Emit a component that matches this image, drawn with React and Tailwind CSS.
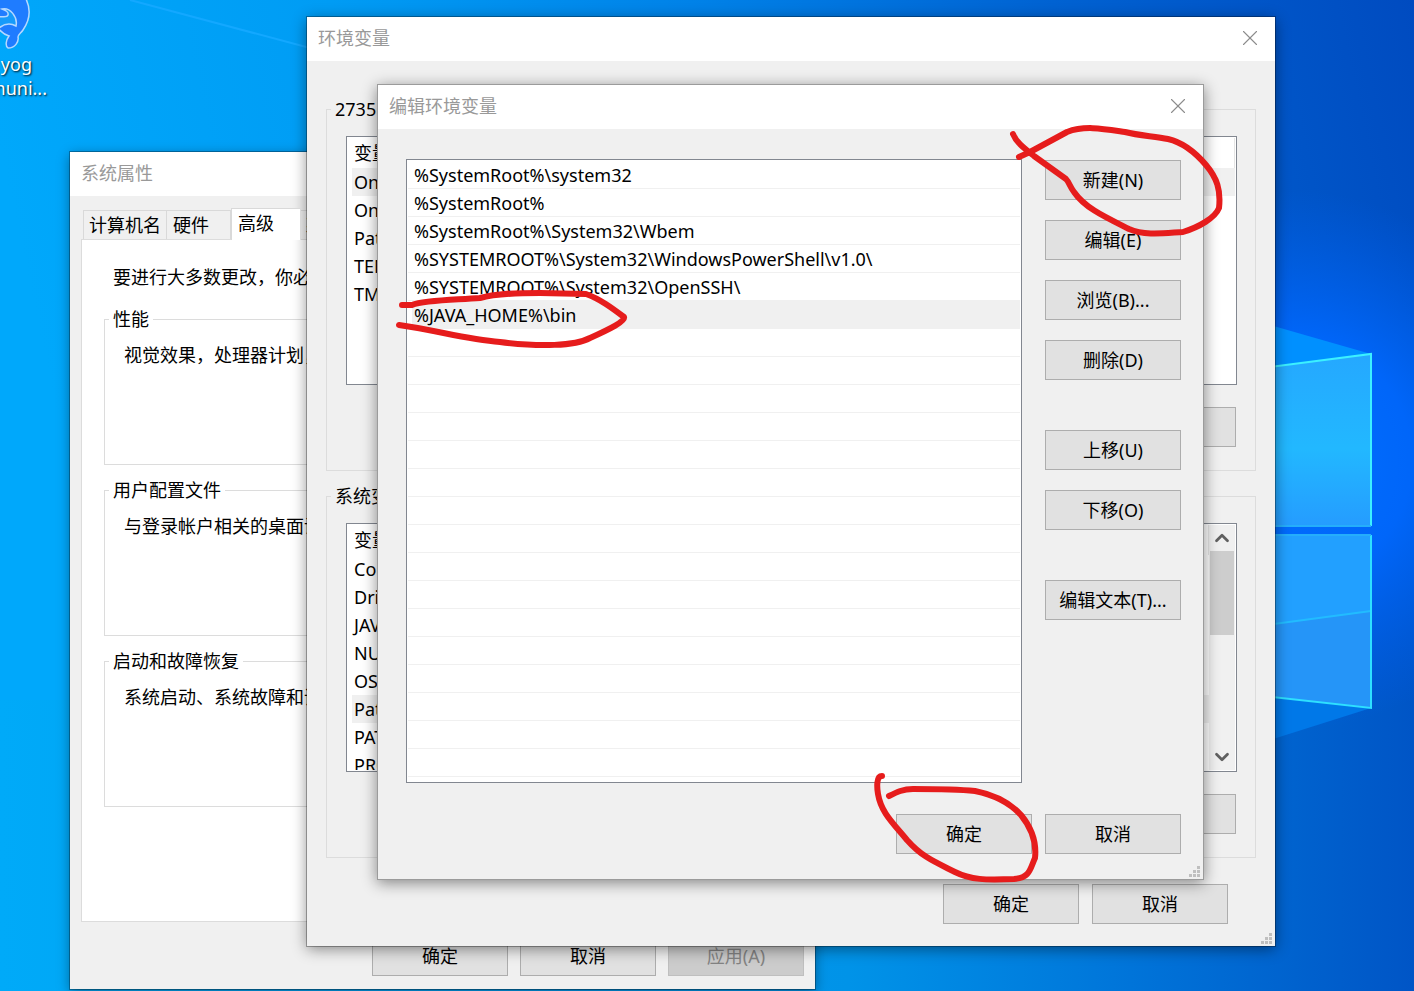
import React from 'react';
import { X, ChevronUp, ChevronDown } from 'lucide-react';

const pathEntries = [
  '%SystemRoot%\\system32',
  '%SystemRoot%',
  '%SystemRoot%\\System32\\Wbem',
  '%SYSTEMROOT%\\System32\\WindowsPowerShell\\v1.0\\',
  '%SYSTEMROOT%\\System32\\OpenSSH\\',
  '%JAVA_HOME%\\bin'
];

const userVariables = ['OneDrive', 'OneDriveConsumer', 'Path', 'TEMP', 'TMP'];

const systemVariables = [
  'ComSpec',
  'DriverData',
  'JAVA_HOME',
  'NUMBER_OF_PROCESSORS',
  'OS',
  'Path',
  'PATHEXT',
  'PROCESSOR_ARCHITECTURE'
];

const DialogButton = ({ children, disabled = false }) => (
  <button
    disabled={disabled}
    className="h-10 w-[136px] shrink-0 border border-[#adadad] bg-[#e1e1e1] text-black whitespace-nowrap disabled:border-[#bfbfbf] disabled:bg-[#cccccc] disabled:text-[#838383]"
  >
    {children}
  </button>
);

const TitleBar = ({ title, closable = true }) => (
  <header className="flex h-11 shrink-0 items-center justify-between bg-white pb-[2px] pl-[11px] pr-3 text-[#999999]">
    <h2>{title}</h2>
    {closable && (
      <button aria-label="关闭" className="text-[#8c8c8c]">
        <X size={26} strokeWidth={1} />
      </button>
    )}
  </header>
);

const ResizeGrip = () => (
  <svg className="absolute right-[2px] bottom-[1px] h-3 w-3" viewBox="0 0 12 12" fill="#bfbfbf" aria-hidden="true">
    <path d="M8 0h3v3H8zM4 4h3v3H4zM8 4h3v3H8zM0 8h3v3H0zM4 8h3v3H4zM8 8h3v3H8z" />
  </svg>
);

const Wallpaper = () => (
  <svg
    className="absolute inset-0 h-full w-full"
    viewBox="0 0 1414 991"
    preserveAspectRatio="none"
    aria-hidden="true"
  >
    <defs>
      <linearGradient id="sky" x1="0" y1="0.15" x2="1" y2="0">
        <stop offset="0" stopColor="#00a8fb" />
        <stop offset="0.25" stopColor="#009cf4" />
        <stop offset="0.5" stopColor="#0082e8" />
        <stop offset="0.75" stopColor="#0062d2" />
        <stop offset="1" stopColor="#004bc0" />
      </linearGradient>
      <linearGradient id="floor" x1="0" y1="0" x2="1" y2="0">
        <stop offset="0" stopColor="#00aaf8" />
        <stop offset="0.6" stopColor="#0093e8" />
        <stop offset="0.8" stopColor="#0074d9" />
        <stop offset="1" stopColor="#0055c6" />
      </linearGradient>
      <radialGradient id="glow" gradientUnits="userSpaceOnUse" cx="1290" cy="460" r="270">
        <stop offset="0" stopColor="#0070ff" />
        <stop offset="0.45" stopColor="#0068ff" stopOpacity="0.9" />
        <stop offset="1" stopColor="#0060f0" stopOpacity="0" />
      </radialGradient>
      <linearGradient id="pane" x1="0" y1="0" x2="0" y2="1">
        <stop offset="0" stopColor="#25a8ff" />
        <stop offset="0.55" stopColor="#22b8ff" />
        <stop offset="1" stopColor="#259cff" />
      </linearGradient>
    </defs>
    <rect width="1414" height="991" fill="url(#sky)" />
    <rect y="700" width="1414" height="291" fill="url(#floor)" />
    <rect width="1414" height="991" fill="url(#glow)" />
    <path d="M130 0 L310 48" stroke="#13a8ff" strokeWidth="2" />
    <path d="M1200 305 L1371 354 L1200 380Z" fill="#0090ff" />
    <path d="M1200 690 L1371 708 L1200 762Z" fill="#0078e8" />
    <path d="M1200 376 L1371 354 V526 H1200Z" fill="url(#pane)" />
    <path d="M1200 535 H1371 V708 L1200 689Z" fill="#22a0ff" />
    <path d="M1200 634 L1371 611 V708 L1200 689Z" fill="#2595f8" />
    <path d="M1200 376 L1371 354 V526" fill="none" stroke="#3cf0ff" strokeWidth="2" />
    <path d="M1200 634 L1371 611" stroke="#22bcff" strokeWidth="2" />
    <path d="M1371 535 V708 L1200 689" fill="none" stroke="#2ee0ff" strokeWidth="2" />
    <path d="M1200 526 H1371M1200 535 H1371" stroke="#25aefb" strokeWidth="2" />
  </svg>
);

const DesktopShortcut = () => (
  <div className="absolute -left-16 top-0 w-[111px] text-right text-lg leading-6 text-white text-shadow-[1px_1px_2px_rgb(0_0_0/0.9)]">
    <svg className="ml-auto mr-[14px] h-[52px] w-[33px]" viewBox="0 0 33 52" aria-hidden="true">
      <path
        d="M-3 -3 H25 C31 8 30 20 23 30 C21 33 18 35 18 37 C19 42 15 48 8 48 C5 46 6 40 9 36 C5 35 1 32 -3 27Z"
        fill="#1f7cff"
        stroke="#b5d8ff"
        strokeWidth="1.5"
      />
      <path
        d="M2 9 C10 7 18 17 16 26 C9 22 4 24 -1 28 V17 C3 16 7 18 8 15 C9 12 5 10 2 9Z"
        fill="#169bfa"
        stroke="#b5d8ff"
        strokeWidth="1.5"
      />
    </svg>
    <p className="pr-[15px]">yog</p>
    <p>Communi...</p>
  </div>
);

const SettingsGroup = ({ title, text }) => (
  <fieldset className="h-[158px] border border-[#dcdcdc] px-[19px] pt-3">
    <legend className="-ml-[15px] px-1">{title}</legend>
    <p className="whitespace-nowrap">{text}</p>
  </fieldset>
);

const SystemProperties = () => (
  <section className="absolute left-[70px] top-[152px] flex h-[837px] w-[745px] flex-col bg-[#f0f0f0] shadow-[0_0_0_1px_rgb(0_0_0/0.3),0_3px_12px_rgb(0_0_0/0.4)]">
    <TitleBar title="系统属性" />
    <div className="flex min-h-0 flex-1 flex-col px-[11px] pt-3">
      <div role="tablist" className="flex h-[31px] items-end">
        <button role="tab" className="ml-[2px] h-[29px] w-[84px] border border-b-0 border-[#d9d9d9]">计算机名</button>
        <button role="tab" className="h-[29px] w-16 border border-l-0 border-b-0 border-[#d9d9d9] pl-[6px] text-left">硬件</button>
        <button role="tab" aria-selected="true" className="z-10 -mb-px h-8 w-[70px] border border-b-0 border-[#d9d9d9] bg-white pb-[3px] pl-[6px] text-left">高级</button>
        <button role="tab" className="h-[29px] border border-l-0 border-b-0 border-[#d9d9d9] px-1">系统保护</button>
        <button role="tab" className="h-[29px] border border-l-0 border-b-0 border-[#d9d9d9] px-1">远程</button>
      </div>
      <div className="flex flex-1 flex-col gap-[13px] border border-[#dcdcdc] bg-white px-[22px] pt-[25px]">
        <p className="mb-[5px] pl-[9px]">要进行大多数更改，你必须作为管理员登录。</p>
        <SettingsGroup title="性能" text="视觉效果，处理器计划，内存使用，以及虚拟内存" />
        <SettingsGroup title="用户配置文件" text="与登录帐户相关的桌面设置" />
        <SettingsGroup title="启动和故障恢复" text="系统启动、系统故障和调试信息" />
      </div>
    </div>
    <footer className="flex justify-end gap-3 px-[11px] pt-[14px] pb-[13px]">
      <DialogButton>确定</DialogButton>
      <DialogButton>取消</DialogButton>
      <DialogButton disabled>应用(A)</DialogButton>
    </footer>
  </section>
);

const ScrollBar = () => (
  <div className="flex w-[26px] shrink-0 flex-col items-center bg-[#f0f0f0] text-[#606060]">
    <button aria-label="向上滚动" className="flex h-[26px] items-center">
      <ChevronUp size={22} strokeWidth={3} />
    </button>
    <div className="h-[84px] w-6 bg-[#cdcdcd]"></div>
    <button aria-label="向下滚动" className="mt-auto flex h-[26px] items-center">
      <ChevronDown size={22} strokeWidth={3} />
    </button>
  </div>
);

const VariableGroup = ({ title, variables, selected, scrollable = false }) => (
  <fieldset className="h-[376px] border border-[#dcdcdc] pl-[19px] pr-[18px] pt-[13px]">
    <legend className="-ml-[15px] h-7 px-1 leading-7">{title}</legend>
    <div className="flex h-[249px] border border-[#828790] bg-white p-px">
      <div className="min-w-0 flex-1 overflow-hidden pl-1">
        <table className="w-full text-left">
          <thead>
            <tr className="h-[30px]">
              <th className="border-r border-[#e5e5e5] pl-[2px] font-normal">变量</th>
            </tr>
          </thead>
          <tbody>
            {variables.map((name) => (
              <tr key={name} className={name === selected ? 'h-7 bg-[#f0f0f0]' : 'h-7'}>
                <td className="pl-[2px]">{name}</td>
              </tr>
            ))}
          </tbody>
        </table>
      </div>
      {scrollable && <ScrollBar />}
    </div>
    <div className="mt-[22px] flex justify-end gap-[13px] pr-px">
      <DialogButton />
    </div>
  </fieldset>
);

const EnvironmentVariables = () => (
  <section className="absolute left-[307px] top-[17px] w-[968px] bg-[#f0f0f0] shadow-[0_0_0_1px_rgb(0_0_0/0.3),0_3px_14px_rgb(0_0_0/0.45)]">
    <TitleBar title="环境变量" />
    <div className="flex flex-col gap-[11px] px-[19px] pt-[34px]">
      <VariableGroup title="2735 的用户变量" variables={userVariables} selected="OneDrive" />
      <VariableGroup title="系统变量" variables={systemVariables} selected="Path" scrollable />
    </div>
    <footer className="flex justify-end gap-[13px] px-[47px] pt-[26px] pb-[22px]">
      <DialogButton>确定</DialogButton>
      <DialogButton>取消</DialogButton>
    </footer>
    <ResizeGrip />
  </section>
);

const EditEnvironmentVariable = () => (
  <section className="absolute left-[377px] top-[84px] w-[827px] border border-[#9b9b9b] bg-[#f0f0f0] shadow-[0_3px_14px_rgb(0_0_0/0.45)]">
    <TitleBar title="编辑环境变量" />
    <div className="flex justify-between pl-7 pr-[22px] pt-[30px]">
      <ul className="h-[624px] w-[616px] overflow-hidden border border-[#828790] bg-white p-px">
        {Array.from({ length: 22 }, (_, i) => (
          <li
            key={i}
            className={
              i === 5
                ? 'ml-1 h-7 border-b border-[#f0f0f0] bg-[#f0f0f0] pl-[2px] leading-7'
                : 'h-7 border-b border-[#f0f0f0] pl-[6px] leading-7'
            }
          >
            {pathEntries[i]}
          </li>
        ))}
      </ul>
      <div className="flex flex-col gap-5 pt-px">
        <DialogButton>新建(N)</DialogButton>
        <DialogButton>编辑(E)</DialogButton>
        <DialogButton>浏览(B)...</DialogButton>
        <DialogButton>删除(D)</DialogButton>
        <div className="flex flex-col gap-5 py-[30px]">
          <DialogButton>上移(U)</DialogButton>
          <DialogButton>下移(O)</DialogButton>
        </div>
        <DialogButton>编辑文本(T)...</DialogButton>
      </div>
    </div>
    <footer className="flex justify-end gap-[13px] px-[22px] pt-[31px] pb-[25px]">
      <DialogButton>确定</DialogButton>
      <DialogButton>取消</DialogButton>
    </footer>
    <ResizeGrip />
  </section>
);

// Red pen marks over the buttons and the new entry
const PenMarks = () => (
  <svg
    className="pointer-events-none absolute left-0 top-0 h-[991px] w-[1414px]"
    viewBox="0 0 1414 991"
    fill="none"
    stroke="#e61c1c"
    strokeWidth="6"
    strokeLinecap="round"
    strokeLinejoin="round"
    aria-hidden="true"
  >
    <path d="M1013 134 C1016 142 1024 148 1034 156 L1066 179 C1069 182 1070 187 1074 192 C1085 208 1105 217 1129 229 C1145 236 1165 233 1183 232 C1199 227 1215 218 1219 208 C1221 190 1217 178 1206 165 C1195 152 1181 142 1168 139 C1155 136 1140 136 1125 132 C1105 129 1085 125 1067 132 L1030 152 L1019 157" />
    <path d="M402 305 L412 305 C425 300 455 300 480 298 C495 294 510 293 540 293 L586 294 C600 299 612 308 624 317 C626 321 610 329 590 338 C575 346 540 347 500 342 C465 339 440 331 399 325" />
    <path d="M882 776 C876 776 877 788 878 794 C881 812 892 822 907 840 C922 857 935 862 955 872 C971 880 985 880 1014 879 C1030 878 1030 869 1035 858 C1037 840 1030 826 1021 815 C1011 804 995 795 975 791 C955 789 930 789 913 789 C903 789 897 792 889 796" />
  </svg>
);

const App = () => (
  <main className="relative min-h-screen overflow-hidden font-['Noto_Sans','Noto_Sans_CJK_SC',sans-serif] text-[18px] leading-6 text-black">
    <Wallpaper />
    <DesktopShortcut />
    <SystemProperties />
    <EnvironmentVariables />
    <EditEnvironmentVariable />
    <PenMarks />
  </main>
);

export default App;
